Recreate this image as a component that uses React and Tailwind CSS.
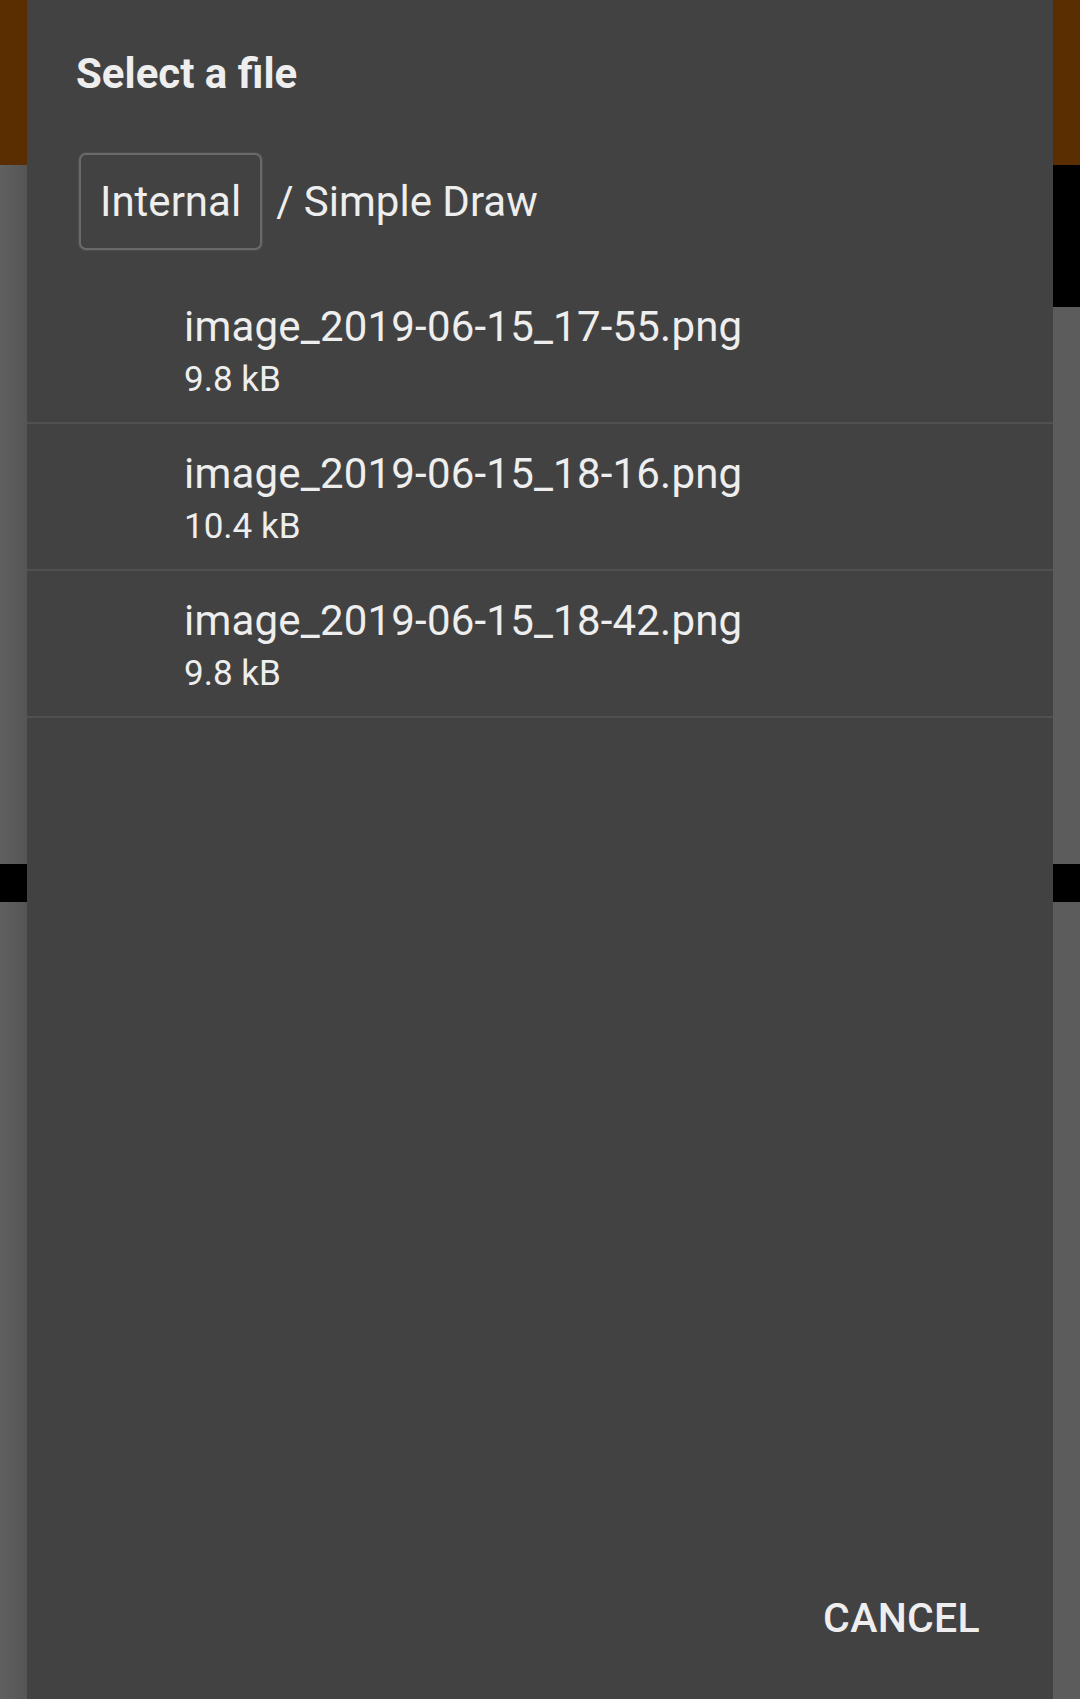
const files = [
  { name: 'image_2019-06-15_17-55.png', size: '9.8 kB' },
  { name: 'image_2019-06-15_18-16.png', size: '10.4 kB' },
  { name: 'image_2019-06-15_18-42.png', size: '9.8 kB' },
];

const App = () => {
  return (
    <div className="relative w-[1080px] h-[1699px] overflow-hidden bg-[#5c5c5c] font-['Roboto',sans-serif]">
      {/* app behind the dialog */}
      <div className="flex flex-col h-full">
        <div className="h-[165px] bg-[#5a2e00]" />
        <div className="h-[142px] flex justify-between">
          <div className="w-[27px] bg-gradient-to-r from-[#606060] to-[#555555]" />
          <div className="w-[27px] bg-black" />
        </div>
        <div className="h-[557px] flex justify-between">
          <div className="w-[27px] bg-gradient-to-r from-[#606060] to-[#555555]" />
          <div className="w-[27px] bg-[#5c5c5c]" />
        </div>
        <div className="h-[38px] bg-black" />
        <div className="flex-1 flex justify-between">
          <div className="w-[27px] bg-gradient-to-r from-[#606060] to-[#555555]" />
          <div className="w-[27px] bg-[#5c5c5c]" />
        </div>
      </div>

      {/* dialog */}
      <div className="absolute left-[27px] top-0 w-[1026px] h-[1699px] bg-[#424242] flex flex-col text-[#eeeeee]">
        <h1 className="pl-[49px] pt-[49px] text-[42px] leading-[50px] font-bold">Select a file</h1>

        <div className="flex items-center mt-[54px] pl-[52px]">
          <div className="h-[97px] px-[19px] flex items-center rounded-[7px] border-2 border-[#6a6a6a] shadow-[0_0_2px_rgba(150,150,150,0.5)]">
            <span className="text-[42px] leading-[50px]">Internal</span>
          </div>
          <span className="ml-[14px] text-[42px] leading-[50px]">/ Simple Draw</span>
        </div>

        <div className="mt-[27px] flex-1">
          {files.map((f) => (
            <div key={f.name} className="h-[147px] border-b-2 border-[#505050] pl-[157px] pt-[25px]">
              <div className="text-[42px] leading-[50px] tracking-[0.2px]">{f.name}</div>
              <div className="mt-[8px] text-[35px] leading-[40px]">{f.size}</div>
            </div>
          ))}
        </div>

        <div className="flex justify-end pr-[73px] pb-[57px]">
          <span className="text-[41px] leading-[48px] font-medium tracking-[0.3px]">CANCEL</span>
        </div>
      </div>
    </div>
  );
};

export default App;
